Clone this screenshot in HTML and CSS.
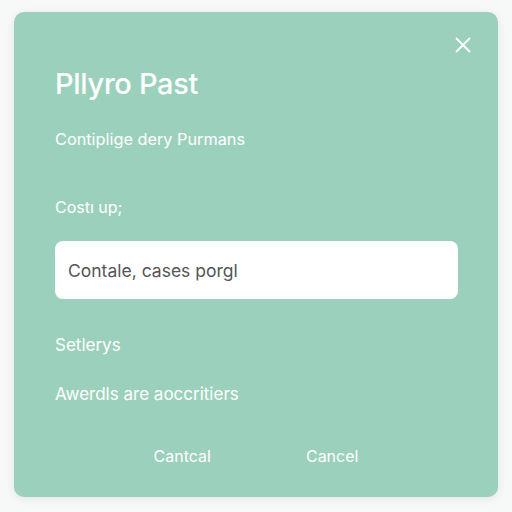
FILE: index.html
```html
<!DOCTYPE html>
<html lang="en">
<head>
    <meta charset="UTF-8">
    <meta name="viewport" content="width=device-width, initial-scale=1.0">
    <title>Pllyro Past</title>
    <link rel="stylesheet" href="styles.css">
</head>
<body>
    <div class="backdrop">
        <div class="dialog">
            <button type="button" class="close" aria-label="Close">
                <svg width="16" height="16" viewBox="0 0 16 16">
                    <path d="M1.5 1.5 L14.5 14.5 M14.5 1.5 L1.5 14.5" stroke="#fff" stroke-width="1.8" stroke-linecap="round"/>
                </svg>
            </button>
            <h1 class="title">Pllyro Past</h1>
            <p class="subtitle">Contiplige dery Purmans</p>
            <label class="label" for="cost">Costı up;</label>
            <input class="field" id="cost" type="text" value="Contale, cases porgl">
            <p class="line first">Setlerys</p>
            <p class="line">Awerdls are aoccritiers</p>
            <div class="actions">
                <button type="button" class="btn">Cantcal</button>
                <button type="button" class="btn">Cancel</button>
            </div>
        </div>
    </div>
</body>
</html>
```

FILE: styles.css
```css
html, body {
    margin: 0;
    padding: 0;
    background-color: #f7f9f9;
}
.backdrop {
    width: 512px;
    height: 512px;
    padding: 12px 14px 15px 14px;
    box-sizing: border-box;
}
.dialog {
    position: relative;
    height: 100%;
    box-sizing: border-box;
    background-color: #9bd1bc;
    border-radius: 10px;
    box-shadow: 0 2px 10px rgba(0, 0, 0, 0.08);
    padding: 53px 40px 0 41px;
    font-family: "Inter", "Open Sans", sans-serif;
    color: #ffffff;
    display: flex;
    flex-direction: column;
}
.close {
    position: absolute;
    top: 21px;
    right: 23px;
    width: 24px;
    height: 24px;
    padding: 4px;
    border: none;
    background: none;
}
.title {
    margin: 0;
    font-size: 29px;
    font-weight: 500;
    line-height: 38px;
    letter-spacing: -0.3px;
}
.subtitle {
    margin: 25px 0 0 0;
    font-size: 16.3px;
    line-height: 22px;
}
.label {
    margin-top: 46px;
    font-size: 16px;
    line-height: 22px;
}
.field {
    margin-top: 23px;
    height: 58px;
    box-sizing: border-box;
    border: none;
    border-radius: 8px;
    background-color: #ffffff;
    padding: 0 13px;
    font-family: "Inter", "Open Sans", sans-serif;
    font-size: 17.5px;
    color: #555555;
}
.line {
    margin: 0;
    font-size: 17px;
    line-height: 22px;
}
.line.first {
    margin-top: 35px;
}
.line + .line {
    margin-top: 27px;
}
.actions {
    margin-top: 41px;
    display: flex;
    justify-content: center;
    gap: 95px;
    padding-right: 1px;
}
.btn {
    border: none;
    background: none;
    color: #ffffff;
    font-family: "Inter", "Open Sans", sans-serif;
    font-size: 16px;
    padding: 0;
}
```
